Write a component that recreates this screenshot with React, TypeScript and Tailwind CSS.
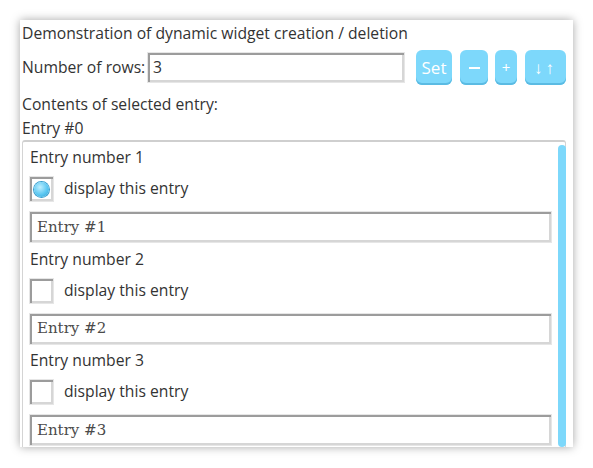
import React from "react";

const inset =
  "bg-white shadow-[inset_2px_2px_0_#9c9c9c,inset_-2px_-2px_0_#d6d6d6,0_0_0_1px_#e6e6e6]";

function Entry({ n, checked }: { n: number; checked?: boolean }) {
  return (
    <div className="flex flex-col mb-[1.5px]">
      <div className="h-[24px] flex items-center text-[15.7px] mt-[4px]">Entry number {n}</div>
      <div className="flex items-center mt-[7px] h-[24px]">
        <div className={`w-[23px] h-[24px] flex items-center justify-center ${inset}`}>
          {checked && (
            <div className="w-[15px] h-[15px] rounded-full bg-[radial-gradient(circle_at_40%_35%,#bfefff_0%,#5cc8f2_55%,#2f9fd0_100%)] shadow-[0_0_0_1px_#3a9fcf]" />
          )}
        </div>
        <span className="ml-[11px] text-[15.7px]">display this entry</span>
      </div>
      <div className={`mt-[11px] h-[30px] w-[521px] flex items-center pl-[7px] ${inset}`}>
        <span className="font-['DejaVu_Serif',serif] text-[15px] text-[#4a4a4a]">Entry #{n}</span>
      </div>
    </div>
  );
}

export default function App() {
  return (
    <div className="w-[593px] h-[468px] bg-white pt-[20px] pl-[20px] font-['Open_Sans',sans-serif] text-[#333]">
      <div className="w-[553px] h-[427px] bg-white shadow-[0_0_9px_rgba(0,0,0,0.35)] pl-[2px] overflow-hidden flex flex-col">
        <div className="h-[26px] flex items-center text-[15.7px] mt-[1px]">
          Demonstration of dynamic widget creation / deletion
        </div>
        <div className="flex items-center mt-[3px] h-[35px]">
          <span className="text-[15.7px] w-[126px]">Number of rows:</span>
          <div className={`w-[256px] h-[29px] flex items-center pl-[5px] ${inset}`}>
            <span className="text-[15.7px]">3</span>
          </div>
          <button className="ml-[12px] w-[36px] h-[35px] rounded-[6px] bg-[#7dd8fb] text-white text-[17px] shadow-[inset_0_-2px_0_#5bbbe3]">
            Set
          </button>
          <button className="ml-[8px] w-[28px] h-[35px] rounded-[6px] bg-[#7dd8fb] shadow-[inset_0_-2px_0_#5bbbe3] flex items-center justify-center">
            <span className="block w-[11px] h-[1.5px] bg-white mt-[1px]" />
          </button>
          <button className="ml-[7px] w-[22px] h-[35px] rounded-[6px] bg-[#7dd8fb] text-white text-[15px] shadow-[inset_0_-2px_0_#5bbbe3]">
            +
          </button>
          <button className="ml-[8px] w-[41px] h-[35px] rounded-[6px] bg-[#7dd8fb] text-white text-[17px] tracking-[3px] shadow-[inset_0_-2px_0_#5bbbe3]">
            ↓↑
          </button>
        </div>
        <div className="h-[24px] flex items-center text-[15.7px] mt-[8px]">Contents of selected entry:</div>
        <div className="h-[23px] flex items-center text-[15.7px]">Entry #0</div>
        <div className="w-[544px] flex-1 rounded-t-[3px] border-t-[2px] border-x border-[#d4d4d4] border-t-[#cfcfcf] flex">
          <div className="flex-1 pl-[7px] flex flex-col">
            <Entry n={1} checked />
            <Entry n={2} />
            <Entry n={3} />
          </div>
          <div className="w-[8px] mr-[-1px] mt-[3px] rounded-full bg-[#7dd8fb]" />
        </div>
      </div>
    </div>
  );
}
